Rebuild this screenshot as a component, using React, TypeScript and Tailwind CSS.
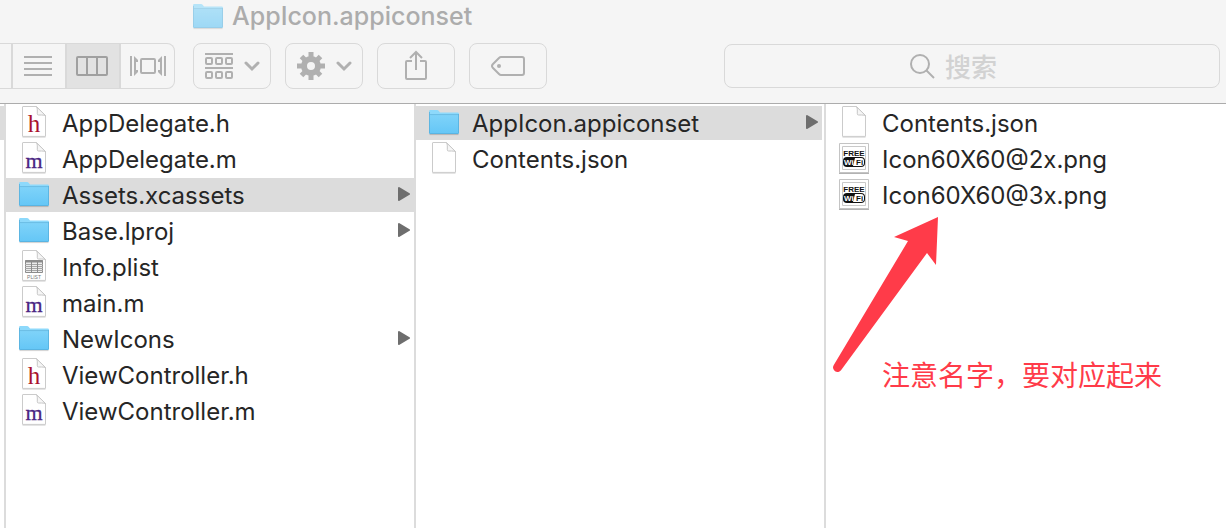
import type { ReactNode } from "react";

type Kind = "h" | "m" | "folder" | "plist" | "doc" | "wifi";

type Entry = {
  name: string;
  kind: Kind;
  selected?: boolean;
};

const projectFiles: Entry[] = [
  { name: "AppDelegate.h", kind: "h" },
  { name: "AppDelegate.m", kind: "m" },
  { name: "Assets.xcassets", kind: "folder", selected: true },
  { name: "Base.lproj", kind: "folder" },
  { name: "Info.plist", kind: "plist" },
  { name: "main.m", kind: "m" },
  { name: "NewIcons", kind: "folder" },
  { name: "ViewController.h", kind: "h" },
  { name: "ViewController.m", kind: "m" },
];

const assetFiles: Entry[] = [
  { name: "AppIcon.appiconset", kind: "folder", selected: true },
  { name: "Contents.json", kind: "doc" },
];

const iconFiles: Entry[] = [
  { name: "Contents.json", kind: "doc" },
  { name: "Icon60X60@2x.png", kind: "wifi" },
  { name: "Icon60X60@3x.png", kind: "wifi" },
];

function FolderIcon() {
  return (
    <svg width="32" height="34" viewBox="0 0 32 34" className="shrink-0" aria-hidden="true">
      <defs>
        <linearGradient id="folder" x1="0" y1="0" x2="0" y2="1">
          <stop offset="0" stopColor="#7fd3f9" />
          <stop offset="1" stopColor="#64c6f6" />
        </linearGradient>
      </defs>
      <path d="M1.5 28.6h29" stroke="#000" strokeOpacity=".18" />
      <path d="M1 5.4Q1 4 2.4 4H9q1 0 1.6.8l1.4 1.6h17.6q1.4 0 1.4 1.4V20H1z" fill="#8dd9fb" />
      <path d="M1 8.6h30v18.2q0 1.2-1.2 1.2H2.2Q1 28 1 26.8z" fill="url(#folder)" />
      <path d="M1.5 8.6h29" stroke="#6bbde4" />
      <path d="M1.5 6v20.8q0 .7.7.7h27.6q.7 0 .7-.7V8" fill="none" stroke="#55aedb" strokeOpacity=".75" />
    </svg>
  );
}

function DocIcon({ kind }: { kind: Kind }) {
  return (
    <svg width="32" height="34" viewBox="0 0 32 34" className="shrink-0" aria-hidden="true">
      <path d="M4.5 31.4h23" stroke="#000" strokeOpacity=".12" />
      <path d="M4.500 1Q4.500.5 5 .5h13.500l9 9v20.900H4.500z" fill="#fff" stroke="#cbcbcb" />
      <path d="M18.5.8q.8 1 .8 3v4q0 1.200 1.200 1.200h3q3 0 4 .5z" fill="#f6f6f6" stroke="#c6c6c6" />
      {kind === "h" && (
        <text x="16" y="26" textAnchor="middle" fontSize="25" fill="#a9122e" className="font-['Liberation_Serif',serif]">h</text>
      )}
      {kind === "m" && (
        <text x="16" y="26" textAnchor="middle" fontSize="22" fill="#4a2583" stroke="#4a2583" strokeWidth=".3" className="font-['Liberation_Serif',serif]">m</text>
      )}
      {kind === "plist" && (
        <g>
          <path d="M7.500 10.500h17v12h-17z" fill="#ededed" stroke="#8c8c8c" />
          <path d="M7 11.500h18" stroke="#8c8c8c" strokeWidth="2" />
          <path d="M7 14.500h18M7 16.500h18M7 18.500h18M7 20.500h18" stroke="#a6a6a6" />
          <path d="M13.500 10v13M19.500 10v13" stroke="#8c8c8c" />
          <text x="16" y="29" textAnchor="middle" fontSize="5" fill="#777" className="font-['Liberation_Sans',sans-serif]">PLIST</text>
        </g>
      )}
    </svg>
  );
}

function WifiIcon() {
  return (
    <svg width="32" height="34" viewBox="0 0 32 34" className="shrink-0" aria-hidden="true">
      <path d="M1 3h30v29H1z" fill="#000" fillOpacity=".3" />
      <path d="M1.5 1.5h29v29h-29z" fill="#fff" stroke="#c4c4c4" />
      <path d="M4.5 4.5h23v23h-23z" fill="none" stroke="#c9c9c9" />
      <text x="16" y="14" textAnchor="middle" fontSize="8" fill="#111" className="font-['Liberation_Sans',sans-serif] font-bold">FREE</text>
      <rect x="5" y="15" width="22" height="10" rx="4" fill="#111" />
      <path d="M17 16h6a3 3 0 0 1 3 3v2a3 3 0 0 1-3 3h-8z" fill="#fff" />
      <text x="6" y="23" fontSize="8" fill="#fff" className="font-['Liberation_Sans',sans-serif] font-bold">Wi</text>
      <text x="18" y="23" fontSize="8" fill="#111" className="font-['Liberation_Sans',sans-serif] font-bold">Fi</text>
    </svg>
  );
}

function EntryIcon({ kind }: { kind: Kind }) {
  if (kind === "folder") return <FolderIcon />;
  if (kind === "wifi") return <WifiIcon />;
  return <DocIcon kind={kind} />;
}

function FileList({ label, entries }: { label: string; entries: Entry[] }) {
  return (
    <ul aria-label={label} className="flex flex-col gap-0.5 pt-0.5">
      {entries.map((entry) => (
        <li key={entry.name}>
          <button
            type="button"
            className={`flex h-[34px] w-full items-center gap-3 pr-1 pl-3 text-left ${entry.selected ? "bg-[#dcdcdc]" : ""}`}
          >
            <EntryIcon kind={entry.kind} />
            <span className="flex-1 pt-0.5 whitespace-nowrap">{entry.name}</span>
            {entry.kind === "folder" && (
              <svg width="12" height="16" viewBox="0 0 12 16" className="mb-0.5" aria-hidden="true">
                <path d="M1 2l10 6-10 6z" fill="#6e6e6e" stroke="#6e6e6e" strokeWidth="2" strokeLinejoin="round" />
              </svg>
            )}
          </button>
        </li>
      ))}
    </ul>
  );
}

function ToolButton({ label, children }: { label: string; children: ReactNode }) {
  return (
    <button
      type="button"
      aria-label={label}
      className="flex h-[46px] w-[78px] items-center justify-center rounded-lg border border-[#d9d9d9] text-[#b0b0b0]"
    >
      {children}
    </button>
  );
}

function Chevron() {
  return (
    <svg width="16" height="12" viewBox="0 0 16 12" fill="none" stroke="currentColor" strokeWidth="3" strokeLinecap="round" aria-hidden="true">
      <path d="M2 3l6 6 6-6" />
    </svg>
  );
}

function ViewSwitch() {
  return (
    <div className="flex h-[46px] rounded-r-lg border border-l-0 border-[#d9d9d9] text-[#b0b0b0]">
      <button type="button" aria-label="Icon view" className="w-[11px]" />
      <button type="button" aria-label="List view" className="flex w-[54px] items-center justify-center border-l-2 border-[#d9d9d9] pr-0.5">
        <svg width="28" height="20" viewBox="0 0 28 20" stroke="currentColor" strokeWidth="2" aria-hidden="true">
          <path d="M0 1h28M0 7h28M0 13h28M0 19h28" />
        </svg>
      </button>
      <button
        type="button"
        aria-label="Column view"
        aria-pressed="true"
        className="flex w-[54px] items-center justify-center border-l-2 border-[#d9d9d9] bg-[#e2e2e2] pr-0.5 text-[#a0a0a0]"
      >
        <svg width="32" height="20" viewBox="0 0 32 20" fill="none" stroke="currentColor" strokeWidth="2" aria-hidden="true">
          <rect x="1" y="1" width="30" height="18" rx="1" />
          <path d="M11 1v18M21 1v18" />
        </svg>
      </button>
      <button type="button" aria-label="Cover flow view" className="flex w-[55px] items-center justify-center border-l-2 border-[#d9d9d9]">
        <svg width="36" height="20" viewBox="0 0 36 20" fill="none" stroke="currentColor" strokeWidth="2" aria-hidden="true">
          <path d="M1 0v20M35 0v20" />
          <path d="M4 0l4 4v2H6v8h2v2l-4 4zM32 0l-4 4v2h2v8h-2v2l4 4z" fill="currentColor" stroke="none" />
          <rect x="11" y="3" width="14" height="14" rx="1" />
        </svg>
      </button>
    </div>
  );
}

function Toolbar() {
  return (
    <div className="flex items-center">
      <ViewSwitch />
      <div className="ml-[18px] flex gap-3.5">
        <ToolButton label="Arrange">
          <svg width="28" height="26" viewBox="0 0 28 26" fill="none" stroke="currentColor" strokeWidth="2" className="mr-[11px]" aria-hidden="true">
            <path d="M0 1h28M0 15h28" />
            <rect x="1" y="5" width="6" height="6" rx="1" />
            <rect x="11" y="5" width="6" height="6" rx="1" />
            <rect x="21" y="5" width="6" height="6" rx="1" />
            <rect x="1" y="19" width="6" height="6" rx="1" />
            <rect x="11" y="19" width="6" height="6" rx="1" />
            <rect x="21" y="19" width="6" height="6" rx="1" />
          </svg>
          <Chevron />
        </ToolButton>
        <ToolButton label="Action">
          <svg width="28" height="28" viewBox="0 0 28 28" fill="none" stroke="currentColor" className="mr-[11px]" aria-hidden="true">
            <circle cx="14" cy="14" r="7" strokeWidth="6" />
            <path d="M14 0v6M14 22v6M0 14h6M22 14h6M4.5 4.5l4 4M19.5 19.5l4 4M4.5 23.5l4-4M19.5 8.5l4-4" strokeWidth="5" />
          </svg>
          <Chevron />
        </ToolButton>
        <ToolButton label="Share">
          <svg width="22" height="30" viewBox="0 0 22 30" fill="none" stroke="currentColor" strokeWidth="2" className="mb-0.5" aria-hidden="true">
            <path d="M7 11H2q-1 0-1 1v16q0 1 1 1h18q1 0 1-1V12q0-1-1-1h-5M11 20V2M5 8l6-6 6 6" />
          </svg>
        </ToolButton>
        <ToolButton label="Tags">
          <svg width="34" height="20" viewBox="0 0 34 20" fill="none" stroke="currentColor" strokeWidth="2" aria-hidden="true">
            <path d="M10 1h21q2 0 2 2v14q0 2-2 2H10q-1 0-2-1l-6-6q-2-2 0-4l6-6q1-1 2-1z" />
            <circle cx="8" cy="10" r="2" fill="currentColor" stroke="none" />
          </svg>
        </ToolButton>
      </div>
      <label className="ml-[177px] flex h-11 flex-1 items-center justify-center gap-2.5 rounded-lg border border-[#d9d9d9] text-[#b0b0b0]">
        <svg width="26" height="26" viewBox="0 0 26 26" fill="none" stroke="currentColor" strokeWidth="2" aria-hidden="true">
          <circle cx="11" cy="11" r="9" />
          <path d="M17 17l8 8" />
        </svg>
        <input
          type="search"
          aria-label="搜索"
          placeholder="搜索"
          className="w-[90px] bg-transparent font-['Noto_Sans_CJK_SC',sans-serif] text-[26px] leading-8 font-medium outline-none placeholder:text-[#d2d2d2]"
        />
      </label>
    </div>
  );
}

export default function App() {
  return (
    <div className="flex min-h-screen flex-col overflow-hidden bg-white font-[Inter,'Noto_Sans_CJK_SC',sans-serif] text-2xl text-[#262626]">
      <header className="flex flex-col gap-[9px] border-b border-[#acacac] bg-[#f5f5f5] pr-1.5 pb-3.5">
        <h1 className="flex h-[34px] items-center gap-2 pl-48 text-[25px] font-medium text-[#acacac]">
          <span className="opacity-60">
            <FolderIcon />
          </span>
          AppIcon.appiconset
        </h1>
        <Toolbar />
      </header>
      <main className="flex flex-1">
        <div className="w-1 shrink-0 pt-0.5">
          <div className="h-[34px] bg-[#dcdcdc]" />
        </div>
        <section className="w-[410px] shrink-0 border-l-2 border-[#dcdcdc]">
          <FileList label="Project" entries={projectFiles} />
        </section>
        <section className="w-[410px] shrink-0 border-l-2 border-[#dcdcdc] pr-0.5">
          <FileList label="Assets.xcassets" entries={assetFiles} />
        </section>
        <section className="relative flex-1 border-l-2 border-[#dcdcdc]">
          <FileList label="AppIcon.appiconset" entries={iconFiles} />
          <p className="mt-[142px] pl-14 font-['Noto_Sans_CJK_SC',sans-serif] text-[28px] leading-10 whitespace-nowrap text-[#ff3b49]">
            注意名字，要对应起来
          </p>
          <svg width="108" height="160" viewBox="0 0 108 160" className="absolute top-28 left-1.5" aria-hidden="true">
            <path d="M106 1L62 21l14 4L1.800 149a4.300 4.300 0 0 0 7.400 5L95 37l9 12z" fill="#ff3b49" />
          </svg>
        </section>
      </main>
    </div>
  );
}
